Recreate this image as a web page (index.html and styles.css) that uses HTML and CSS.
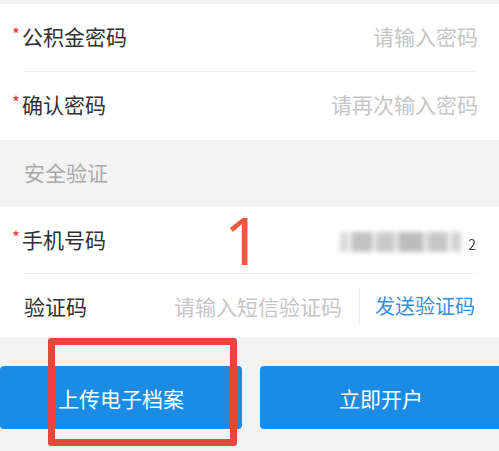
FILE: index.html
```html
<!DOCTYPE html>
<html lang="zh-CN">
<head>
<meta charset="utf-8">
<title>开户</title>
<link rel="stylesheet" href="styles.css">
</head>
<body>
<div class="page">
  <div class="gap-top"></div>
  <div class="card">
    <div class="row row-a">
      <span class="label"><span class="req">*</span>公积金密码</span>
      <span class="ph">请输入密码</span>
    </div>
    <div class="divider"></div>
    <div class="row row-b">
      <span class="label"><span class="req">*</span>确认密码</span>
      <span class="ph">请再次输入密码</span>
    </div>
  </div>
  <div class="section-title">安全验证</div>
  <div class="card">
    <div class="row row-c">
      <span class="label"><span class="req">*</span>手机号码</span>
      <span class="phone">
        <span class="blur"><i class="b1"></i><i class="b2"></i><i class="b3"></i><i class="b4"></i><i class="b5"></i><i class="b6"></i></span>
        <span class="last">2</span>
      </span>
    </div>
    <div class="divider"></div>
    <div class="row row-d">
      <span class="label plain">验证码</span>
      <span class="ph ph-code">请输入短信验证码</span>
      <span class="vline"></span>
      <span class="send">发送验证码</span>
    </div>
  </div>
  <div class="actions">
    <div class="btn">上传电子档案</div>
    <div class="btn">立即开户</div>
  </div>
  <div class="mark-num">1</div>
  <div class="mark-box"></div>
</div>
</body>
</html>
```
FILE: styles.css
```css
html, body {
  margin: 0;
  padding: 0;
}
body {
  background: #f3f3f3;
  font-family: "Noto Sans CJK SC", "Noto Sans", sans-serif;
  width: 499px;
  height: 451px;
  overflow: hidden;
}
.page {
  position: relative;
  width: 499px;
  height: 451px;
}
.gap-top {
  height: 4px;
}
.card {
  background: #ffffff;
}
.row {
  display: flex;
  align-items: center;
  padding: 0 21px 0 12px;
  font-size: 21px;
  box-sizing: border-box;
}
.row-a { height: 67px; padding-bottom: 4px; }
.row-b { height: 68px; padding-bottom: 4px; }
.row-c { height: 66px; padding-bottom: 2px; }
.row-d { height: 63px; padding-left: 24px; padding-right: 24px; }
.label {
  color: #303030;
  white-space: nowrap;
  display: flex;
  align-items: center;
}
.req {
  color: #e0342c;
  font-size: 17px;
  width: 10px;
  margin-top: -5px;
}
.ph {
  margin-left: auto;
  color: #c6c6c6;
  white-space: nowrap;
}
.divider {
  height: 1px;
  background: #ececec;
  margin: 0 24px;
}
.section-title {
  height: 67px;
  box-sizing: border-box;
  padding-bottom: 4px;
  display: flex;
  align-items: center;
  padding-left: 24px;
  color: #a9a9a9;
  font-size: 21px;
}
.phone {
  margin-left: auto;
  display: flex;
  align-items: flex-end;
  height: 28px;
  margin-right: 2px;
  margin-top: 4px;
}
.blur {
  display: flex;
  align-items: center;
  height: 26px;
  width: 124px;
  filter: blur(2.5px);
}
.blur i {
  display: block;
  height: 20px;
  background: #c9c9c9;
  margin-right: 3px;
}
.blur .b1 { width: 8px; background: #d8d8d8; }
.blur .b2 { width: 22px; background: #c2c2c2; }
.blur .b3 { width: 20px; background: #c8c8c8; }
.blur .b4 { width: 26px; background: #bcbcbc; }
.blur .b5 { width: 22px; background: #c6c6c6; }
.blur .b6 { width: 10px; background: #d2d2d2; }
.last {
  color: #444;
  font-size: 14px;
  line-height: 14px;
  margin-left: 4px;
  margin-bottom: 4px;
  filter: blur(0.6px);
}
.ph-code {
  margin-left: auto;
}
.vline {
  width: 1px;
  height: 38px;
  background: #ececec;
  margin: 0 15px 0 17px;
}
.send {
  color: #3a8ed2;
  white-space: nowrap;
  font-size: 20px;
}
.actions {
  display: flex;
  gap: 18px;
  margin-top: 29px;
  width: 520px;
}
.btn {
  width: 242px;
  flex: none;
  height: 63px;
  background: #1b8ce6;
  border-radius: 4px;
  color: #ffffff;
  font-size: 21px;
  display: flex;
  align-items: center;
  justify-content: center;
}
.mark-num {
  position: absolute;
  left: 224px;
  top: 199px;
  font-family: "Noto Sans", sans-serif;
  font-size: 66px;
  line-height: 80px;
  color: #f0573c;
}
.mark-box {
  position: absolute;
  left: 48px;
  top: 338px;
  width: 175px;
  height: 94px;
  border: 7px solid #e5473a;
  border-radius: 3px;
}
```
